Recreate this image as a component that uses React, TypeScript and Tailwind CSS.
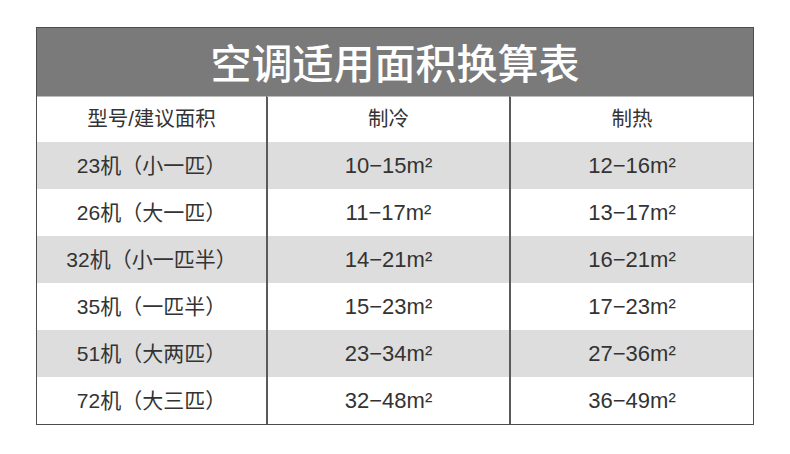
import React from "react";

const rows = [
  ["23机（小一匹）", "10−15", "12−16"],
  ["26机（大一匹）", "11−17", "13−17"],
  ["32机（小一匹半）", "14−21", "16−21"],
  ["35机（一匹半）", "15−23", "17−23"],
  ["51机（大两匹）", "23−34", "27−36"],
  ["72机（大三匹）", "32−48", "36−49"],
];

function Area({ v }: { v: string }) {
  return <span className="text-[22px]">{v}m²</span>;
}

export default function App() {
  return (
    <div
      className="w-[790px] h-[454px] bg-white pt-[27px] pl-[36px]"
      style={{ fontFamily: '"Liberation Sans", "Noto Sans CJK SC", sans-serif' }}
    >
      <div className="w-[718px] border-[1.5px] border-[#4d4d4d] text-[#333333]">
        <div className="h-[68px] bg-[#7a7a7a] flex items-center justify-center">
          <span
            className="text-white text-[41px] font-medium leading-none -mt-[2px]"
            style={{ fontFamily: '"Noto Sans CJK SC", sans-serif' }}
          >
            空调适用面积换算表
          </span>
        </div>
        <div className="grid grid-cols-[229px_243px_1fr]">
          <div className="h-[46px] flex items-center justify-center border-t border-[#bdbdbd] text-[20.5px]">
            型号/建议面积
          </div>
          <div className="h-[46px] flex items-center justify-center border-l-2 border-t border-l-[#5a5a5a] border-t-[#bdbdbd] text-[20.5px]">
            制冷
          </div>
          <div className="h-[46px] flex items-center justify-center border-l-2 border-t border-l-[#5a5a5a] border-t-[#bdbdbd] text-[20.5px]">
            制热
          </div>
          {rows.map((r, i) => {
            const bg = i % 2 === 0 ? "bg-[#dddddd]" : "bg-white";
            return (
              <React.Fragment key={i}>
                <div className={`h-[47px] flex items-center justify-center text-[21px] ${bg}`}>
                  {r[0]}
                </div>
                <div className={`h-[47px] flex items-center justify-center border-l-2 border-[#5a5a5a] ${bg}`}>
                  <Area v={r[1]} />
                </div>
                <div className={`h-[47px] flex items-center justify-center border-l-2 border-[#5a5a5a] ${bg}`}>
                  <Area v={r[2]} />
                </div>
              </React.Fragment>
            );
          })}
        </div>
      </div>
    </div>
  );
}
